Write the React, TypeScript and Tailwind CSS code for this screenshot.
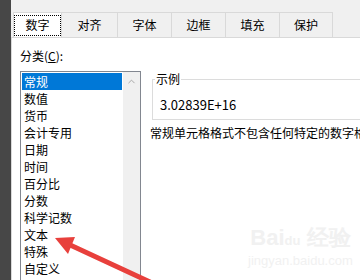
import { ChevronUp } from 'lucide-react'

// 单元格格式对话框：数字页签
const tabs = [
  { name: '数字', w: 'w-[49px]' },
  { name: '对齐', w: 'w-[56px]' },
  { name: '字体', w: 'w-[54px]' },
  { name: '边框', w: 'w-[54px]' },
  { name: '填充', w: 'w-[54px]' },
  { name: '保护', w: 'w-[53px]' },
]

const categories = ['常规', '数值', '货币', '会计专用', '日期', '时间', '百分比', '分数', '科学记数', '文本', '特殊', '自定义']

export default function App() {
  return (
    <div
      className="relative w-[360px] h-[280px] overflow-hidden flex bg-[#f0f0f0] text-[12px] text-black"
      style={{ fontFamily: '"Noto Sans CJK SC", "Noto Sans", sans-serif' }}
    >
      {/* 对话框外的深色背景 */}
      <div className="w-[11px] shrink-0 bg-[#474747]" />

      <div className="flex-1 flex flex-col min-w-0">
        {/* 页签 */}
        <div className="h-[37px] pt-[12px] pl-[2px] flex shrink-0">
          {tabs.map((t, i) => (
            <div
              key={t.name}
              className={`${t.w} h-[25px] flex items-center justify-center border-t border-r border-[#d9d9d9] ${
                i === 0 ? 'bg-white border-l' : 'bg-[#f0f0f0]'
              }`}
            >
              {i === 0 ? (
                <span className="w-[47px] h-[21px] flex items-center justify-center border border-dotted border-black leading-none">
                  {t.name}
                </span>
              ) : (
                <span className="leading-none">{t.name}</span>
              )}
            </div>
          ))}
        </div>

        {/* 页签内容 */}
        <div className="flex-1 bg-white border-t border-l border-[#d9d9d9] flex pl-[8px] min-w-0">
          <div className="w-[121px] shrink-0 flex flex-col">
            <div className="pt-[11px] h-[26px] leading-[14px]">
              分类(<span className="underline">C</span>):
            </div>
            <div className="mt-[7px] h-[230px] border border-[#828790] flex">
              <div className="flex-1 p-[1px]">
                {categories.map((c, i) => (
                  <div
                    key={c}
                    className={`h-[17px] leading-[17px] pl-[2px] ${i === 0 ? 'bg-[#0078d7] text-white' : ''}`}
                  >
                    {c}
                  </div>
                ))}
              </div>
              <div className="w-[17px] bg-[#f0f0f0] flex justify-center pt-[4px]">
                <ChevronUp size={11} strokeWidth={2} className="text-[#a3a3a3]" />
              </div>
            </div>
          </div>

          <div className="ml-[9px] flex-1 flex flex-col min-w-0 overflow-hidden">
            <fieldset className="mt-[33px] ml-[2px] h-[49px] border border-[#dcdcdc] border-r-0 pl-[2px]">
              <legend className="px-[1px] leading-[16px]">示例</legend>
              <div className="pl-[5px] pt-[11px] leading-[14px] text-[13px]">3.02839E+16</div>
            </fieldset>
            <div className="mt-[6px] leading-[14px] whitespace-nowrap">
              常规单元格格式不包含任何特定的数字格式。
            </div>
          </div>
        </div>
      </div>

      {/* 水印 */}
      <div className="absolute left-[248px] top-[226px] flex flex-col items-center text-[#f1f1f1] pointer-events-none">
        <div className="text-[22px] font-bold leading-[24px]" style={{ fontFamily: '"Liberation Sans", sans-serif' }}>
          Bai<span className="text-[13px]">du</span> 经验
        </div>
        <div className="text-[13px] leading-[16px]" style={{ fontFamily: '"Liberation Sans", sans-serif' }}>
          jingyan.baidu.com
        </div>
      </div>

      {/* 红色箭头 */}
      <svg className="absolute inset-0 pointer-events-none" width="360" height="280" viewBox="0 0 360 280">
        <line x1="150" y1="282" x2="68" y2="244" stroke="#e8403c" strokeWidth="5" strokeLinecap="round" />
        <polygon points="55,238 75,237 68,254" fill="#e8403c" />
      </svg>
    </div>
  )
}
